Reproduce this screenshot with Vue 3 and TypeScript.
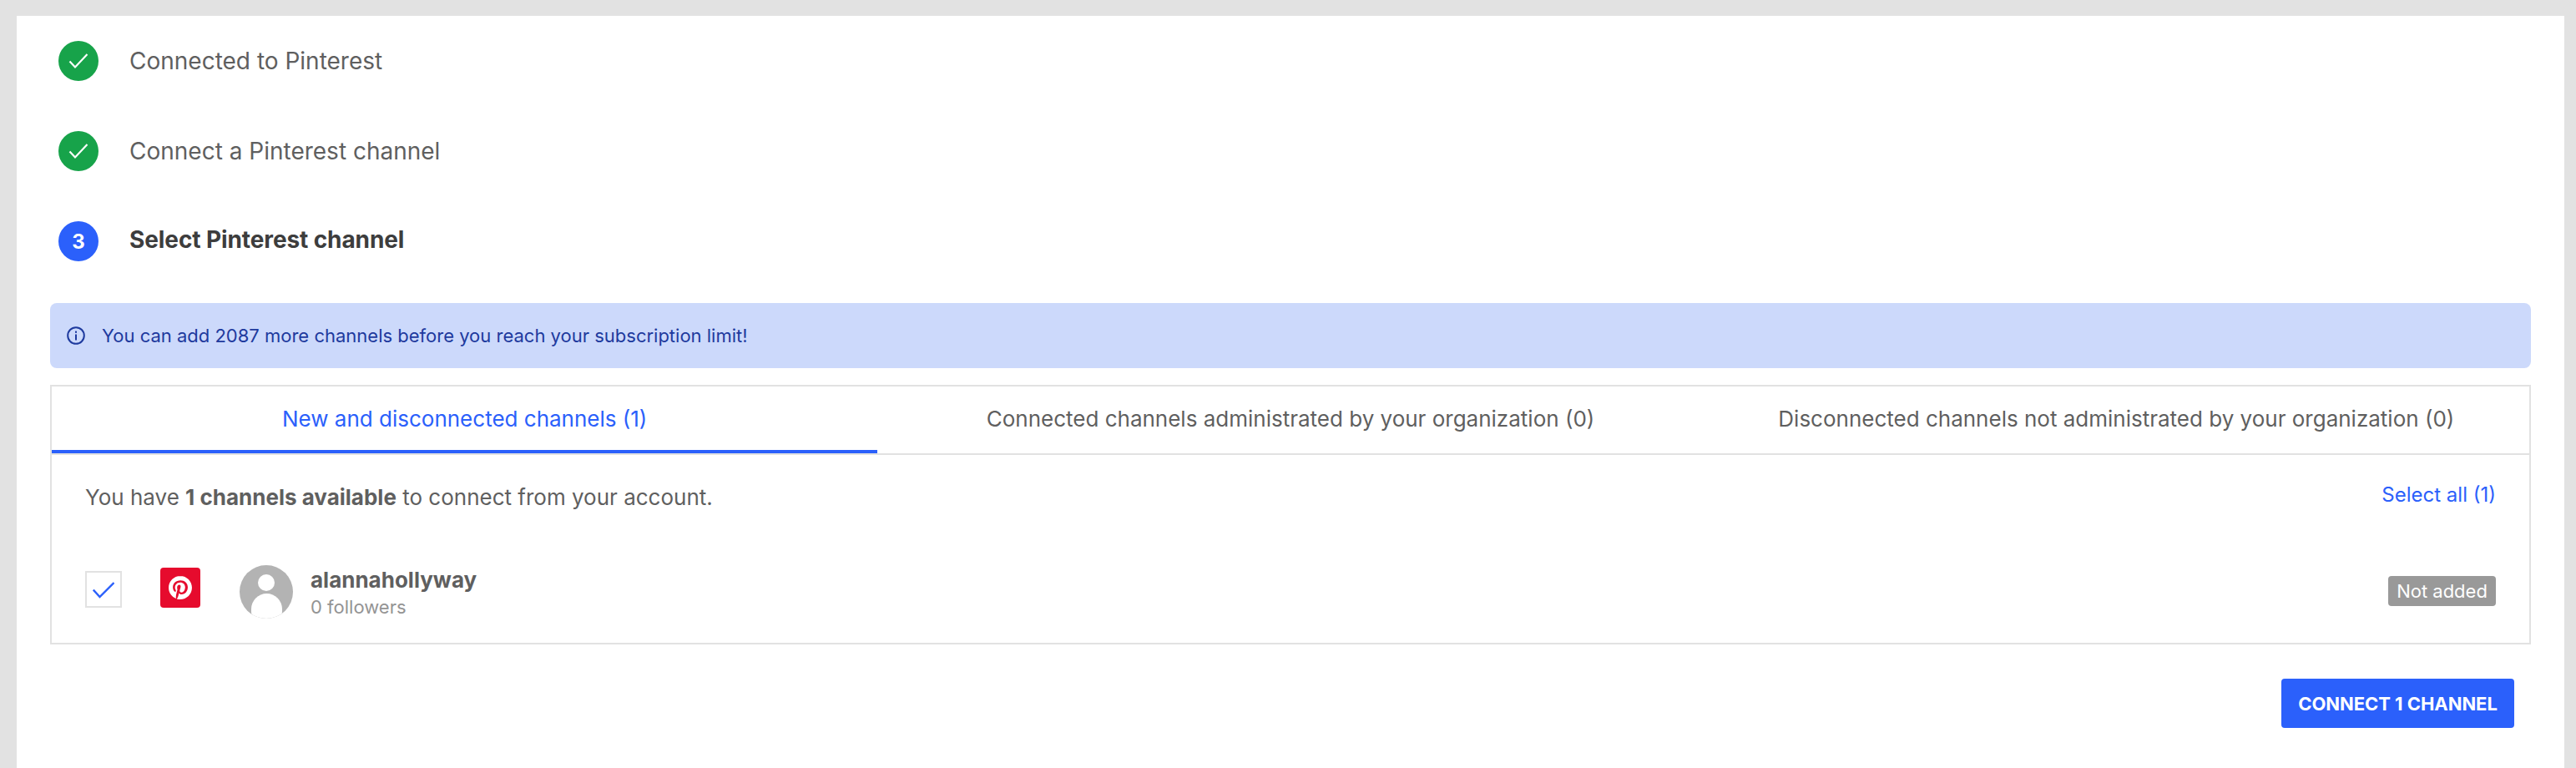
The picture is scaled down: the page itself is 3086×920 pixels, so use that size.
<script setup lang="ts">
interface Step { label: string; state: 'done' | 'current'; num: number }
const steps: Step[] = [
  { label: 'Connected to Pinterest', state: 'done', num: 1 },
  { label: 'Connect a Pinterest channel', state: 'done', num: 2 },
  { label: 'Select Pinterest channel', state: 'current', num: 3 },
]
const tabs: string[] = [
  'New and disconnected channels (1)',
  'Connected channels administrated by your organization (0)',
  'Disconnected channels not administrated by your organization (0)',
]
</script>

<template>
  <div class="page">
    <main class="panel">
      <ol class="steps">
        <li v-for="s in steps" :key="s.num" class="step" :class="s.state">
          <span class="badge-circle">
            <svg v-if="s.state === 'done'" width="24" height="20" viewBox="0 0 24 20" fill="none">
              <path d="M1.5 10.5 L8 17.5 L22.5 2" stroke="#fff" stroke-width="2.2" />
            </svg>
            <template v-else>{{ s.num }}</template>
          </span>
          <span class="step-label">{{ s.label }}</span>
        </li>
      </ol>

      <div class="alert">
        <svg class="alert-icon" width="22" height="22" viewBox="0 0 22 22" fill="none">
          <circle cx="11" cy="11" r="9.8" stroke="#1e3a9e" stroke-width="2" />
          <rect x="10" y="9.5" width="2" height="7" fill="#1e3a9e" />
          <rect x="10" y="5.6" width="2" height="2.2" fill="#1e3a9e" />
        </svg>
        <span>You can add 2087 more channels before you reach your subscription limit!</span>
      </div>

      <section class="box">
        <div class="tabs">
          <div v-for="(t, i) in tabs" :key="t" class="tab" :class="{ active: i === 0 }">{{ t }}</div>
        </div>
        <div class="box-body">
          <div class="summary">
            <p>You have <strong>1 channels available</strong> to connect from your account.</p>
            <a class="select-all">Select all (1)</a>
          </div>
          <div class="channel">
            <span class="checkbox">
              <svg width="26" height="20" viewBox="0 0 26 20" fill="none">
                <path d="M0.8 9.5 L8.5 18 L25.5 1" stroke="#2b60fb" stroke-width="2.4" />
              </svg>
            </span>
            <span class="network">
              <svg width="28" height="28" viewBox="0 0 24 24">
                <path fill="#fff" d="M12.017 0C5.396 0 .029 5.367.029 11.987c0 5.079 3.158 9.417 7.618 11.162-.105-.949-.199-2.403.041-3.439.219-.937 1.406-5.957 1.406-5.957s-.359-.72-.359-1.781c0-1.663.967-2.911 2.168-2.911 1.024 0 1.518.769 1.518 1.688 0 1.029-.653 2.567-.992 3.992-.285 1.193.6 2.165 1.775 2.165 2.128 0 3.768-2.245 3.768-5.487 0-2.861-2.063-4.869-5.008-4.869-3.41 0-5.409 2.562-5.409 5.199 0 1.033.394 2.143.889 2.741.099.12.112.225.085.345-.09.375-.293 1.199-.334 1.363-.053.225-.172.271-.401.165-1.495-.69-2.433-2.878-2.433-4.646 0-3.776 2.748-7.252 7.92-7.252 4.158 0 7.392 2.967 7.392 6.923 0 4.135-2.607 7.462-6.233 7.462-1.214 0-2.354-.629-2.758-1.379l-.749 2.848c-.269 1.045-1.004 2.352-1.498 3.146 1.123.345 2.306.535 3.55.535 6.607 0 11.985-5.365 11.985-11.987C23.97 5.39 18.592.026 11.985.026L12.017 0z" />
              </svg>
            </span>
            <svg class="avatar" width="64" height="64" viewBox="0 0 64 64">
              <defs>
                <clipPath id="avatar-clip"><circle cx="32" cy="32" r="32" /></clipPath>
              </defs>
              <circle cx="32" cy="32" r="32" fill="#b3b3b3" />
              <circle cx="32" cy="21" r="10" fill="#fff" />
              <rect x="14" y="34" width="37" height="40" rx="18.5" fill="#fff" clip-path="url(#avatar-clip)" />
            </svg>
            <div class="who">
              <div class="name">alannahollyway</div>
              <div class="followers">0 followers</div>
            </div>
            <span class="status">Not added</span>
          </div>
        </div>
      </section>

      <div class="actions">
        <button class="primary" type="button">CONNECT 1 CHANNEL</button>
      </div>
    </main>
  </div>
</template>

<style>
html, body { margin: 0; background: #e2e2e2; }
</style>

<style scoped>
.page {
  box-sizing: border-box;
  width: 3086px;
  height: 920px;
  overflow: hidden;
  padding: 19px 14px 0 20px;
  background: #e2e2e2;
  font-family: Inter, "Liberation Sans", sans-serif;
  color: #5f5f5f;
}
.panel {
  box-sizing: border-box;
  height: 901px;
  padding: 0 40px;
  background: #fff;
}
.steps { list-style: none; margin: 0; padding: 0; }
.step {
  display: flex;
  align-items: center;
  height: 108px;
  padding-left: 10px;
  font-size: 28px;
}
.badge-circle {
  display: flex;
  align-items: center;
  justify-content: center;
  flex: none;
  width: 48px;
  height: 48px;
  margin-right: 37px;
  border-radius: 50%;
  background: #17a34a;
  color: #fff;
  font-size: 24px;
  font-weight: 700;
}
.current .badge-circle { background: #2b60fb; }
.current .step-label { font-weight: 700; color: #3d3d3d; letter-spacing: -0.1px; padding-bottom: 4px; }

.alert {
  display: flex;
  align-items: center;
  height: 78px;
  margin-top: 20px;
  padding-left: 20px;
  border-radius: 8px;
  background: #ccd9fb;
  color: #1e3a9e;
  font-size: 22px;
}
.alert-icon { margin-right: 20px; flex: none; }

.box {
  box-sizing: border-box;
  height: 311px;
  margin-top: 20px;
  border: 2px solid #e2e2e2;
}
.tabs { display: grid; grid-template-columns: repeat(3, 1fr); border-bottom: 2px solid #e2e2e2; }
.tab {
  box-sizing: border-box;
  display: flex;
  align-items: center;
  justify-content: center;
  height: 80px;
  border-bottom: 4px solid transparent;
  font-size: 26px;
}
.tab.active { color: #2b60fb; border-bottom-color: #2b60fb; }

.box-body { padding: 0 40px; }
.summary {
  display: flex;
  justify-content: space-between;
  align-items: flex-start;
  height: 132px;
  padding-top: 34px;
  box-sizing: border-box;
}
.summary p { margin: 0; font-size: 26px; line-height: 34px; }
.summary strong { font-weight: 700; }
.select-all { margin: -1px 0 0 0; color: #2b60fb; font-size: 24px; line-height: 30px; }

.channel { display: flex; align-items: flex-start; }
.checkbox {
  box-sizing: border-box;
  display: flex;
  align-items: center;
  justify-content: center;
  flex: none;
  width: 44px;
  height: 44px;
  margin-top: 7px;
  padding-top: 2px;
  border: 2px solid #e2e2e2;
}
.network {
  display: flex;
  align-items: center;
  justify-content: center;
  flex: none;
  width: 48px;
  height: 48px;
  margin: 3px 47px 0 46px;
  border-radius: 4px;
  background: #e60b2d;
}
.avatar { flex: none; margin-right: 21px; }
.who { flex: 1; }
.name { font-size: 26px; font-weight: 700; line-height: 36px; }
.followers { font-size: 22px; line-height: 28px; color: #949494; }
.status {
  flex: none;
  width: 129px;
  margin-top: 13px;
  height: 36px;
  line-height: 36px;
  text-align: center;
  border-radius: 4px;
  background: #999;
  color: #fff;
  font-size: 22px;
}

.actions { display: flex; justify-content: flex-end; margin-top: 41px; padding-right: 20px; }
.primary {
  height: 59px;
  width: 279px;
  padding: 0;
  border: 0;
  border-radius: 4px;
  background: #2b60fb;
  color: #fff;
  font-family: inherit;
  font-size: 22px;
  font-weight: 700;
  letter-spacing: -0.05px;
}
</style>
